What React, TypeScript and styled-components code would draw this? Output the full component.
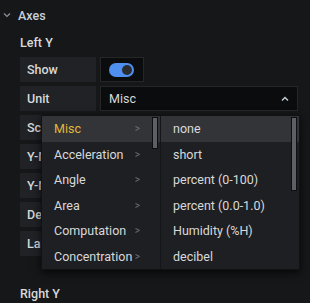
import React from "react";
import styled, { createGlobalStyle } from "styled-components";

const GlobalStyle = createGlobalStyle`
  html, body {
    margin: 0;
    padding: 0;
    background: #161719;
  }
  body {
    font-family: Roboto, "Liberation Sans", Arial, sans-serif;
    color: #d8d9da;
  }
`;

const Page = styled.div`
  position: relative;
  width: 310px;
  height: 303px;
  overflow: hidden;
  background: #161719;
  padding: 6px 0 0 0;
  box-sizing: border-box;
`;

const SectionHeader = styled.div`
  display: flex;
  align-items: center;
  height: 18px;
  padding-left: 3px;
  gap: 7px;
  font-size: 12.5px;
  font-weight: 500;
  color: #c7d0d9;
`;

const Group = styled.div`
  padding-left: 20px;
`;

const GroupTitle = styled.div<{ $top: number }>`
  font-size: 12.5px;
  font-weight: 500;
  color: #d8d9da;
  margin-top: ${(p) => p.$top}px;
  height: 16px;
  line-height: 16px;
`;

const Rows = styled.div`
  display: flex;
  flex-direction: column;
  gap: 4px;
  margin-top: 6px;
`;

const Row = styled.div`
  display: flex;
  gap: 4px;
  height: 25px;
`;

const Label = styled.div`
  width: 76px;
  box-sizing: border-box;
  background: #202226;
  padding-left: 7px;
  display: flex;
  align-items: center;
  font-size: 12.5px;
  font-weight: 500;
  color: #d8d9da;
  white-space: nowrap;
  overflow: hidden;
`;

const Field = styled.div<{ $width: number }>`
  width: ${(p) => p.$width}px;
  box-sizing: border-box;
  background: #0b0c0e;
  border: 1px solid #262628;
  display: flex;
  align-items: center;
  padding: 0 8px;
  justify-content: space-between;
  font-size: 12.5px;
  color: #d8d9da;
`;

const Toggle = styled.div`
  width: 25px;
  height: 14px;
  border-radius: 7px;
  background: #4f8ff0;
  position: relative;
  &::after {
    content: "";
    position: absolute;
    right: 2px;
    top: 2px;
    width: 10px;
    height: 10px;
    border-radius: 50%;
    background: #2a2c30;
  }
`;

const Menu = styled.div`
  position: absolute;
  left: 41px;
  top: 115px;
  display: flex;
  background: #1e1f22;
  box-shadow: 0 3px 8px rgba(0, 0, 0, 0.7);
  border: 1px solid #111214;
`;

const Column = styled.div<{ $width: number }>`
  position: relative;
  width: ${(p) => p.$width}px;
  display: flex;
  flex-direction: column;
  & + & {
    border-left: 1px solid #141517;
  }
`;

const Item = styled.div<{ $active?: boolean; $gold?: boolean }>`
  height: 25.5px;
  display: flex;
  align-items: center;
  justify-content: space-between;
  padding: 0 20px 0 12px;
  font-size: 12.5px;
  color: ${(p) => (p.$gold ? "#e0b83a" : "#d8d9da")};
  background: ${(p) => (p.$active ? "#333437" : "transparent")};
`;

const Caret = styled.span`
  font-size: 10px;
  color: #6e7177;
`;

const Scrollbar = styled.div<{ $height: number }>`
  position: absolute;
  right: 2px;
  top: 1px;
  width: 4px;
  height: ${(p) => p.$height}px;
  background: #5c5f66;
  border: 1px solid #0d0e10;
`;

const categories = [
  "Misc",
  "Acceleration",
  "Angle",
  "Area",
  "Computation",
  "Concentration",
];

const units = [
  "none",
  "short",
  "percent (0-100)",
  "percent (0.0-1.0)",
  "Humidity (%H)",
  "decibel",
];

const labels = ["Show", "Unit", "Scale", "Y-Min", "Y-Max", "Decimals", "Label"];

export default function App() {
  return (
    <Page>
      <GlobalStyle />
      <SectionHeader>
        <svg width="8" height="6" viewBox="0 0 8 6">
          <path d="M1 1.5 L4 4.5 L7 1.5" stroke="#8e9199" strokeWidth="1.2" fill="none" />
        </svg>
        Axes
      </SectionHeader>
      <Group>
        <GroupTitle $top={11}>Left Y</GroupTitle>
        <Rows>
          {labels.map((l, i) => (
            <Row key={l}>
              <Label>{l}</Label>
              {i === 0 && (
                <Field $width={44}>
                  <Toggle />
                </Field>
              )}
              {i === 1 && (
                <Field $width={198}>
                  Misc
                  <svg width="8" height="6" viewBox="0 0 8 6">
                    <path d="M1 4.5 L4 1.5 L7 4.5" stroke="#c7d0d9" strokeWidth="1.4" fill="none" />
                  </svg>
                </Field>
              )}
            </Row>
          ))}
        </Rows>
        <GroupTitle $top={30}>Right Y</GroupTitle>
      </Group>
      <Menu>
        <Column $width={118}>
          {categories.map((c, i) => (
            <Item key={c} $active={i === 0} $gold={i === 0}>
              {c}
              <Caret>&gt;</Caret>
            </Item>
          ))}
          <Scrollbar $height={30} />
        </Column>
        <Column $width={138}>
          {units.map((u, i) => (
            <Item key={u} $active={i === 0}>
              {u}
            </Item>
          ))}
          <Scrollbar $height={72} />
        </Column>
      </Menu>
    </Page>
  );
}
